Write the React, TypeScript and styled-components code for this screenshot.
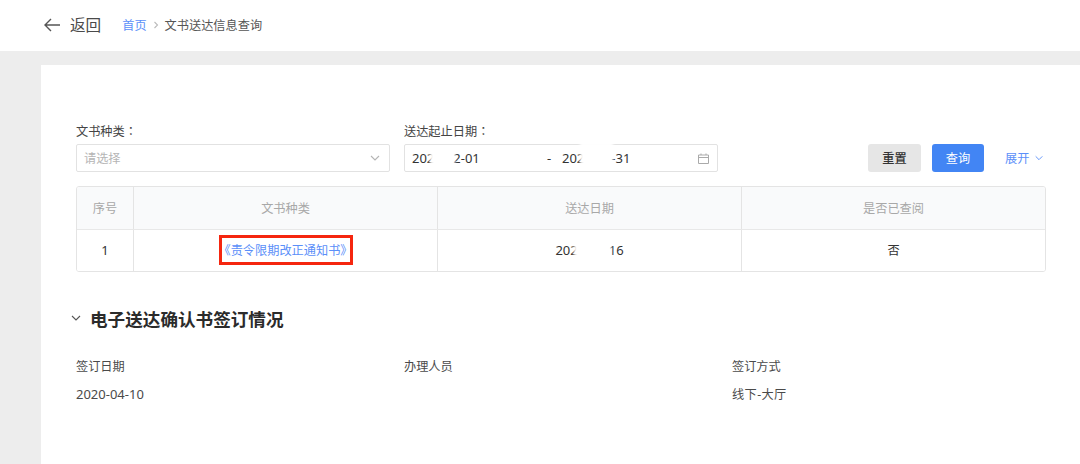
import React from "react";
import styled, { createGlobalStyle } from "styled-components";

const GlobalStyle = createGlobalStyle`
  html, body {
    margin: 0;
    padding: 0;
    background: #ededed;
    font-family: "Noto Sans", "Noto Sans CJK SC", sans-serif;
    font-size: 12.2px;
    color: #333;
  }
  * {
    box-sizing: border-box;
  }
`;

const Page = styled.div`
  width: 1080px;
  height: 464px;
  overflow: hidden;
  display: flex;
  flex-direction: column;
`;

const TopBar = styled.header`
  height: 51px;
  flex: none;
  display: flex;
  align-items: center;
  padding: 0 0 2px 44px;
  background: #fff;
`;

const BackLink = styled.a`
  display: flex;
  align-items: center;
  gap: 10px;
  margin-right: 21px;
  font-size: 15.6px;
  color: #4a4a4a;
`;

const Crumbs = styled.nav`
  display: flex;
  align-items: center;
  gap: 6px;
  color: #555;
`;

const CrumbLink = styled.a`
  color: #5b8ff9;
`;

const Main = styled.main`
  flex: 1;
  margin: 14px 0 0 41px;
  padding: 58px 34px 0 35px;
  background: #fff;
`;

const FilterRow = styled.div`
  display: flex;
  align-items: flex-end;
`;

const Field = styled.div`
  width: 314px;
  margin-right: 14px;
`;

const FieldLabel = styled.div`
  height: 21px;
  line-height: 16px;
  color: #444;
`;

const Colon = styled.span`
  font-family: "Noto Sans CJK TC", sans-serif;
`;

const InputBox = styled.div`
  height: 28px;
  display: flex;
  align-items: center;
  justify-content: space-between;
  padding: 0 8px 0 7px;
  border: 1px solid #e2e2e2;
  border-radius: 2px;
  color: #333;
`;

const Placeholder = styled.span`
  color: #b5b5b5;
`;

const DateText = styled.span<{ $w: number }>`
  flex: none;
  display: flex;
  align-items: center;
  width: ${(p) => p.$w}px;
  font-size: 13px;
  white-space: nowrap;
`;

const DateDash = styled.span`
  flex: none;
  width: 15px;
  font-size: 13px;
`;

const CalendarSlot = styled.span`
  display: flex;
  margin-left: auto;
`;

const Smudge = styled.span<{ $w: number; $tall?: boolean }>`
  position: relative;
  display: inline-block;
  width: ${(p) => p.$w}px;
  height: 14px;
  &::before {
    content: "";
    position: absolute;
    left: -4px;
    right: -2px;
    top: ${(p) => (p.$tall ? "-9px" : "0")};
    bottom: 0;
    background: #fff;
    filter: blur(1.5px);
  }
`;

const Actions = styled.div`
  display: flex;
  align-items: center;
  margin-left: 136px;
  height: 28px;
`;

const Button = styled.button<{ $primary?: boolean }>`
  width: ${(p) => (p.$primary ? "52px" : "53px")};
  height: 28px;
  margin-right: 11px;
  padding: 0;
  border: 0;
  border-radius: 3px;
  font: inherit;
  font-weight: ${(p) => (p.$primary ? 400 : 500)};
  background: ${(p) => (p.$primary ? "#4285f4" : "#e6e6e6")};
  color: ${(p) => (p.$primary ? "#fff" : "#333")};
`;

const Expand = styled.a`
  display: flex;
  align-items: center;
  gap: 5px;
  margin-left: 10px;
  color: #5b8ff9;
`;

const Table = styled.div`
  margin-top: 14px;
  width: 970px;
  border: 1px solid #e4e4e4;
  border-radius: 3px;
  overflow: hidden;
`;

const Row = styled.div<{ $head?: boolean }>`
  display: grid;
  grid-template-columns: 57px 304px 304px 1fr;
  height: ${(p) => (p.$head ? "43px" : "41px")};
  background: ${(p) => (p.$head ? "#f9fafb" : "#fff")};
  color: ${(p) => (p.$head ? "#a8a8a8" : "#333")};
  border-bottom: ${(p) => (p.$head ? "1px solid #e8e8e8" : "0")};
`;

const Cell = styled.div<{ $digits?: boolean; $raised?: boolean }>`
  display: flex;
  align-items: center;
  justify-content: center;
  padding-bottom: ${(p) => (p.$raised ? "2px" : "0")};
  font-size: ${(p) => (p.$digits ? "13px" : "inherit")};
  border-right: 1px solid #e4e4e4;
  &:last-child {
    border-right: 0;
  }
`;

const DocLink = styled.a`
  display: flex;
  align-items: center;
  justify-content: center;
  width: 134px;
  height: 30px;
  border: 3px solid #f5260f;
  color: #5b8ff9;
  white-space: nowrap;
`;

const SectionTitle = styled.h2`
  display: flex;
  align-items: center;
  gap: 8px;
  margin: 33px 0 0 -6px;
  height: 26px;
  font-size: 17.6px;
  font-weight: 700;
  color: #2b2b2b;
`;

const InfoGrid = styled.div`
  display: grid;
  grid-template-columns: 328px 328px 1fr;
  grid-auto-rows: 28px;
  margin-top: 21px;
  align-items: center;
  color: #4a4a4a;
`;

const InfoDate = styled.span`
  font-size: 13px;
`;

const InfoMethod = styled.span`
  letter-spacing: 0.4px;
`;

const Chevron = ({ color, size = 12 }: { color: string; size?: number }) => (
  <svg width={size} height={size} viewBox="0 0 12 12" fill="none">
    <path d="M2 4l4 4 4-4" stroke={color} strokeWidth="1.1" />
  </svg>
);

const BackArrow = () => (
  <svg width="16" height="14" viewBox="0 0 16 14" fill="none">
    <path d="M16 7H1M7 1L1 7l6 6" stroke="#555" strokeWidth="1.4" />
  </svg>
);

const CalendarIcon = () => (
  <svg width="11" height="11" viewBox="0 0 11 11" fill="none">
    <path d="M.5 2h10v8.5H.5zM.5 4.5h10M3 .5V2M8 .5V2" stroke="#aaa" strokeWidth="1" />
  </svg>
);

const CrumbArrow = () => (
  <svg width="6" height="8" viewBox="0 0 6 8" fill="none">
    <path d="M1.5 1l3 3-3 3" stroke="#bbb" strokeWidth="1.1" />
  </svg>
);

const App: React.FC = () => {
  return (
    <Page>
      <GlobalStyle />
      <TopBar>
        <BackLink>
          <BackArrow />
          返回
        </BackLink>
        <Crumbs>
          <CrumbLink>首页</CrumbLink>
          <CrumbArrow />
          <span>文书送达信息查询</span>
        </Crumbs>
      </TopBar>
      <Main>
        <FilterRow>
          <Field>
            <FieldLabel>
              文书种类<Colon>：</Colon>
            </FieldLabel>
            <InputBox>
              <Placeholder>请选择</Placeholder>
              <Chevron color="#b5b5b5" />
            </InputBox>
          </Field>
          <Field>
            <FieldLabel>
              送达起止日期<Colon>：</Colon>
            </FieldLabel>
            <InputBox>
              <DateText $w={135}>
                202
                <Smudge $w={19} />
                2-01
              </DateText>
              <DateDash>-</DateDash>
              <DateText $w={80}>
                202
                <Smudge $w={27} $tall />
                -31
              </DateText>
              <CalendarSlot>
                <CalendarIcon />
              </CalendarSlot>
            </InputBox>
          </Field>
          <Actions>
            <Button>重置</Button>
            <Button $primary>查询</Button>
            <Expand>
              展开
              <Chevron color="#5b8ff9" size={10} />
            </Expand>
          </Actions>
        </FilterRow>
        <Table>
          <Row $head>
            <Cell>序号</Cell>
            <Cell>文书种类</Cell>
            <Cell>送达日期</Cell>
            <Cell>是否已查阅</Cell>
          </Row>
          <Row>
            <Cell $digits $raised>1</Cell>
            <Cell $raised>
              <DocLink>《责令限期改正通知书》</DocLink>
            </Cell>
            <Cell $digits $raised>
              202
              <Smudge $w={31} />
              16
            </Cell>
            <Cell $raised>否</Cell>
          </Row>
        </Table>
        <SectionTitle>
          <Chevron color="#555" />
          电子送达确认书签订情况
        </SectionTitle>
        <InfoGrid>
          <span>签订日期</span>
          <span>办理人员</span>
          <span>签订方式</span>
          <InfoDate>2020-04-10</InfoDate>
          <span />
          <InfoMethod>线下-大厅</InfoMethod>
        </InfoGrid>
      </Main>
    </Page>
  );
};

export default App;
